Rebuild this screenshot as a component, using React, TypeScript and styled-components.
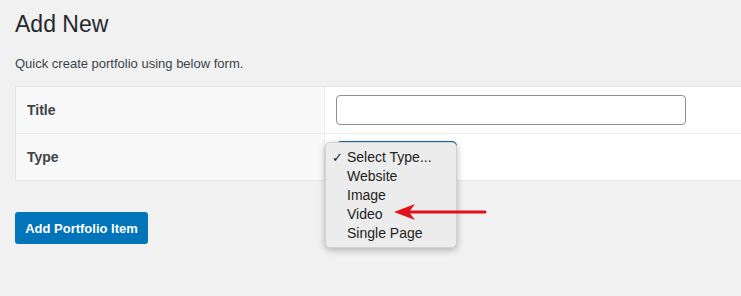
import React from 'react';
import styled, { createGlobalStyle } from 'styled-components';

const GlobalStyle = createGlobalStyle`
  html {
    overflow: hidden;
  }
  body {
    margin: 0;
    padding: 0;
    background: #f1f1f1;
    font-family: "Liberation Sans", Arial, sans-serif;
    color: #23282d;
  }
`;

const Page = styled.div`
  min-height: 296px;
  box-sizing: border-box;
  padding: 10px 0 20px 15px;
`;

const Heading = styled.h1`
  margin: 0;
  font-size: 23px;
  line-height: 29px;
  font-weight: 400;
  color: #23282d;
`;

const Intro = styled.p`
  margin: 16px 0 0;
  font-size: 13px;
  line-height: 18px;
  color: #3c434a;
`;

const FormTable = styled.div`
  margin-top: 13px;
  margin-right: -20px;
  border: 1px solid #e5e5e5;
  background: #fff;
`;

const Row = styled.div<{ $last?: boolean }>`
  display: flex;
  height: 46px;
  border-bottom: ${(p) => (p.$last ? 'none' : '1px solid #ececec')};
`;

const LabelCell = styled.div`
  width: 309px;
  flex: none;
  display: flex;
  align-items: center;
  padding-left: 11px;
  box-sizing: border-box;
  background: #f9f9f9;
  border-right: 1px solid #ececec;
  font-size: 14px;
  font-weight: 700;
  color: #3c434a;
`;

const FieldCell = styled.div`
  position: relative;
  flex: 1;
  display: flex;
  align-items: center;
  padding-left: 11px;
`;

const TextInput = styled.input`
  width: 350px;
  height: 30px;
  box-sizing: border-box;
  border: 1px solid #8c8f94;
  border-radius: 4px;
  background: #fff;
  outline: none;
`;

const SelectBox = styled.div`
  align-self: flex-start;
  margin-top: 7px;
  width: 121px;
  height: 30px;
  box-sizing: border-box;
  border: 2px solid #1f6a9a;
  border-radius: 5px;
  background: #fff;
`;

const Menu = styled.ul`
  position: absolute;
  left: 0;
  top: 8px;
  width: 132px;
  margin: 0;
  padding: 5px 0 4px;
  list-style: none;
  box-sizing: border-box;
  background: #ececec;
  border: 1px solid #d2d2d2;
  border-radius: 5px;
  box-shadow: 0 2px 7px rgba(0, 0, 0, 0.28);
  z-index: 2;
`;

const MenuItem = styled.li`
  display: flex;
  align-items: center;
  padding-left: 6px;
  height: 19px;
  font-size: 14px;
  line-height: 19px;
  color: #222;
`;

const Check = styled.span`
  width: 15px;
  flex: none;
  font-family: "DejaVu Sans", sans-serif;
  font-size: 13px;
  font-weight: 700;
  color: #222;
`;

const Pointer = styled.svg`
  position: absolute;
  left: 64px;
  top: 66px;
  z-index: 3;
`;

const SubmitButton = styled.button`
  margin-top: 31px;
  width: 133px;
  height: 32px;
  border: none;
  border-radius: 3px;
  background: #0274b9;
  color: #fff;
  font-family: "Liberation Sans", Arial, sans-serif;
  font-size: 13px;
  font-weight: 700;
  cursor: pointer;
`;

const types = ['Select Type...', 'Website', 'Image', 'Video', 'Single Page'];

export default function App() {
  return (
    <Page>
      <GlobalStyle />
      <Heading>Add New</Heading>
      <Intro>Quick create portfolio using below form.</Intro>
      <FormTable>
        <Row>
          <LabelCell>Title</LabelCell>
          <FieldCell>
            <TextInput type="text" />
          </FieldCell>
        </Row>
        <Row $last>
          <LabelCell>Type</LabelCell>
          <FieldCell>
            <SelectBox />
            <Menu>
              {types.map((t, i) => (
                <MenuItem key={t}>
                  <Check>{i === 0 ? '✓' : ''}</Check>
                  {t}
                </MenuItem>
              ))}
            </Menu>
            <Pointer width="100" height="24" viewBox="0 0 100 24">
              <line x1="19" y1="12" x2="96" y2="12" stroke="#e3111b" strokeWidth="3" strokeLinecap="round" />
              <path d="M5 12 L26 4 L20 12 L26 20 Z" fill="#e3111b" />
            </Pointer>
          </FieldCell>
        </Row>
      </FormTable>
      <SubmitButton>Add Portfolio Item</SubmitButton>
    </Page>
  );
}
